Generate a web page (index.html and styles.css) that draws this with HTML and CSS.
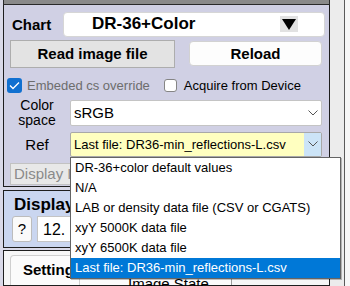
FILE: index.html
```html
<!DOCTYPE html>
<html lang="en">
<head>
    <meta charset="UTF-8">
    <title>Chart settings</title>
    <link rel="stylesheet" href="styles.css">
</head>
<body>
    <div class="window">
        <div class="main">
            <div class="top-strip"></div>

            <!-- chart panel -->
            <section class="panel chart-panel">
                <div class="row chart-row">
                    <span class="chart-label">Chart</span>
                    <div class="chart-select">
                        <span class="chart-value">DR-36+Color</span>
                        <span class="tri-box">
                            <svg width="14" height="11" viewBox="0 0 14 11"><polygon points="0,0 14,0 7,11" fill="#000"/></svg>
                        </span>
                    </div>
                </div>
                <div class="row btn-row">
                    <button class="btn btn-read">Read image file</button>
                    <button class="btn btn-reload">Reload</button>
                </div>
                <div class="row check-row">
                    <label class="check">
                        <span class="box box-on">
                            <svg width="11" height="9" viewBox="0 0 11 9"><polyline points="1,4.5 4,7.5 10,1.5" fill="none" stroke="#fff" stroke-width="1.3"/></svg>
                        </span>
                        <span class="check-text dim">Embeded cs override</span>
                    </label>
                    <label class="check check-2">
                        <span class="box box-off"></span>
                        <span class="check-text">Acquire from Device</span>
                    </label>
                </div>
                <div class="row field-row">
                    <span class="field-label small">Color<br>space</span>
                    <div class="select select-cs">
                        <span class="select-text">sRGB</span>
                        <span class="chev">
                            <svg width="10" height="6" viewBox="0 0 10 6"><polyline points="0.5,0.5 5,5 9.5,0.5" fill="none" stroke="#555" stroke-width="1"/></svg>
                        </span>
                    </div>
                </div>
                <div class="row field-row ref-row">
                    <span class="field-label">Ref</span>
                    <div class="select select-ref">
                        <span class="select-text">Last file: DR36-min_reflections-L.csv</span>
                        <span class="chev chev-btn">
                            <svg width="10" height="6" viewBox="0 0 10 6"><polyline points="0.5,0.5 5,5 9.5,0.5" fill="none" stroke="#555" stroke-width="1"/></svg>
                        </span>
                    </div>
                </div>
                <div class="row">
                    <button class="btn btn-display">Display Image</button>
                </div>
            </section>

            <!-- display panel -->
            <section class="panel display-panel">
                <div class="display-title">Display</div>
                <div class="row display-row">
                    <button class="btn btn-help">?</button>
                    <div class="display-select">12. Display</div>
                </div>
            </section>

            <!-- settings panel -->
            <section class="panel settings-panel">
                <div class="tabs">
                    <div class="tab tab-active">Settings</div>
                    <div class="tab tab-image">Image State</div>
                </div>
            </section>
        </div>
        <div class="side"></div>

        <!-- open list of the Ref select -->
        <ul class="dropdown">
            <li>DR-36+color default values</li>
            <li>N/A</li>
            <li>LAB or density data file (CSV or CGATS)</li>
            <li>xyY 5000K data file</li>
            <li>xyY 6500K data file</li>
            <li class="selected">Last file: DR36-min_reflections-L.csv</li>
        </ul>
    </div>
</body>
</html>
```

FILE: styles.css
```css
*{
    padding: 0;
    margin: 0;
    box-sizing: border-box;
}
body{
    width: 350px;
    height: 286px;
    overflow: hidden;
    background-color: #f0f0f0;
    font-family: "Liberation Sans", Arial, sans-serif;
    color: #000;
}
.window{
    position: relative;
    display: flex;
    height: 286px;
    background-color: #d9d9e8;
}
.main{
    width: 327px;
    margin-left: 3px;
    display: flex;
    flex-direction: column;
}
.side{
    flex: 1;
    background-color: #ececec;
    border-right: 5px solid #f7f7f7;
    position: relative;
}
.side::after{
    content: "";
    position: absolute;
    right: 0;
    top: 0;
    bottom: 0;
    width: 1px;
    background-color: #5a5a5a;
}
.top-strip{
    height: 5px;
    background-color: #8a8a8a;
    border: 1px solid #2a2a2a;
    border-top: none;
}
.panel{
    border: 1px solid #1e1e1e;
}
.row{
    display: flex;
    align-items: center;
}

/* chart panel */
.chart-panel{
    height: 188px;
    border-top: none;
    background-color: #d0d0e4;
}
.chart-row{
    height: 25px;
    margin-top: 7px;
}
.chart-label{
    width: 59px;
    padding-left: 8px;
    font-size: 15px;
    font-weight: bold;
}
.chart-select{
    width: 262px;
    height: 25px;
    display: flex;
    align-items: center;
    justify-content: space-between;
    background-color: #fff;
    border: 1px solid #d6d6d6;
    border-radius: 4px;
    padding-left: 28px;
    padding-right: 26px;
}
.chart-value{
    font-size: 17px;
    font-weight: bold;
}
.tri-box{
    width: 18px;
    height: 16px;
    display: flex;
    align-items: center;
    justify-content: center;
    background-color: #e2e2e2;
}
.btn{
    font-family: "Liberation Sans", Arial, sans-serif;
    font-size: 15px;
    font-weight: bold;
    color: #000;
}
.btn-row{
    margin-top: 3px;
    height: 28px;
}
.btn-read{
    width: 165px;
    height: 28px;
    margin-left: 6px;
    background-color: #e3e3e3;
    border: 1px solid #adadad;
}
.btn-reload{
    width: 133px;
    height: 25px;
    margin-left: 14px;
    background-color: #fdfdfd;
    border: 1px solid #d2d2d2;
    border-radius: 4px;
}
.check-row{
    height: 18px;
    margin-top: 9px;
    font-size: 13px;
}
.check{
    display: flex;
    align-items: center;
}
.box{
    display: flex;
    align-items: center;
    justify-content: center;
    border-radius: 3px;
}
.box-on{
    width: 15px;
    height: 15px;
    margin-left: 3px;
    margin-right: 5px;
    background-color: #1070d0;
}
.box-off{
    width: 13px;
    height: 13px;
    margin-left: 14px;
    margin-right: 7px;
    background-color: #fff;
    border: 1px solid #858585;
}
.dim{
    color: #6d6d6d;
}
.field-row{
    height: 26px;
    margin-top: 5px;
}
.ref-row{
    height: 25px;
    margin-top: 6px;
}
.field-label{
    width: 66px;
    text-align: center;
    font-size: 15px;
}
.field-label.small{
    font-size: 14px;
    line-height: 15px;
}
.select{
    width: 252px;
    height: 100%;
    display: flex;
    align-items: center;
    justify-content: space-between;
    border: 1px solid #c4c4c4;
    border-radius: 2px;
    background-color: #fff;
}
.select-text{
    padding-left: 3px;
    font-size: 13px;
    white-space: nowrap;
}
.select-cs .select-text{
    font-size: 15px;
}
.chev{
    width: 17px;
    height: 100%;
    display: flex;
    align-items: center;
    justify-content: center;
}
.select-ref{
    background-color: #ffffc0;
    border-color: #a8a8a8;
}
.chev-btn{
    background-color: #cce4f7;
}
.btn-display{
    width: 150px;
    height: 22px;
    margin-left: 6px;
    margin-top: 6px;
    padding-left: 3px;
    text-align: left;
    font-weight: normal;
    color: #8a8a8a;
    background-color: #e8e8e8;
    border: 1px solid #c2c2c2;
    white-space: nowrap;
    overflow: hidden;
}

/* display panel */
.display-panel{
    height: 60px;
    margin-top: 3px;
    background-color: #cad6f0;
}
.display-title{
    margin: 4px 0 0 10px;
    font-size: 17px;
    font-weight: bold;
    line-height: 19px;
}
.display-row{
    margin-top: 2px;
}
.btn-help{
    width: 20px;
    height: 26px;
    margin-left: 8px;
    font-weight: normal;
    background-color: #fafafa;
    border: 1px solid #bcbcbc;
    border-radius: 3px;
}
.display-select{
    width: 285px;
    height: 26px;
    margin-left: 5px;
    padding: 4px 0 0 5px;
    font-size: 16px;
    background-color: #fff;
    border: 1px solid #c4c4c4;
}

/* settings panel */
.settings-panel{
    flex: 1;
    margin-top: 2px;
    background-color: #f6f6f6;
}
.tabs{
    display: flex;
    margin-top: 4px;
    margin-left: 6px;
}
.tab{
    height: 30px;
    padding: 5px 0 0 12px;
    font-size: 15px;
    font-weight: bold;
    border: 1px solid #cfcfcf;
    border-bottom: none;
    border-radius: 4px 4px 0 0;
    background-color: #fbfbfb;
}
.tab-active{
    width: 70px;
}
.tab-image{
    width: 152px;
    padding: 19px 0 0 48px;
    font-weight: normal;
    border-color: #9c9c9c;
    border-radius: 0;
    border-left: none;
}

/* open list */
.dropdown{
    position: absolute;
    left: 70px;
    top: 157px;
    width: 271px;
    list-style: none;
    background-color: #fff;
    border: 1px solid #646464;
    box-shadow: 1px 1px 0 rgba(0,0,0,0.25);
}
.dropdown li{
    height: 20px;
    line-height: 20px;
    padding-left: 4px;
    font-size: 13px;
    white-space: nowrap;
}
.dropdown .selected{
    background-color: #0078d7;
    color: #fff;
}
```
